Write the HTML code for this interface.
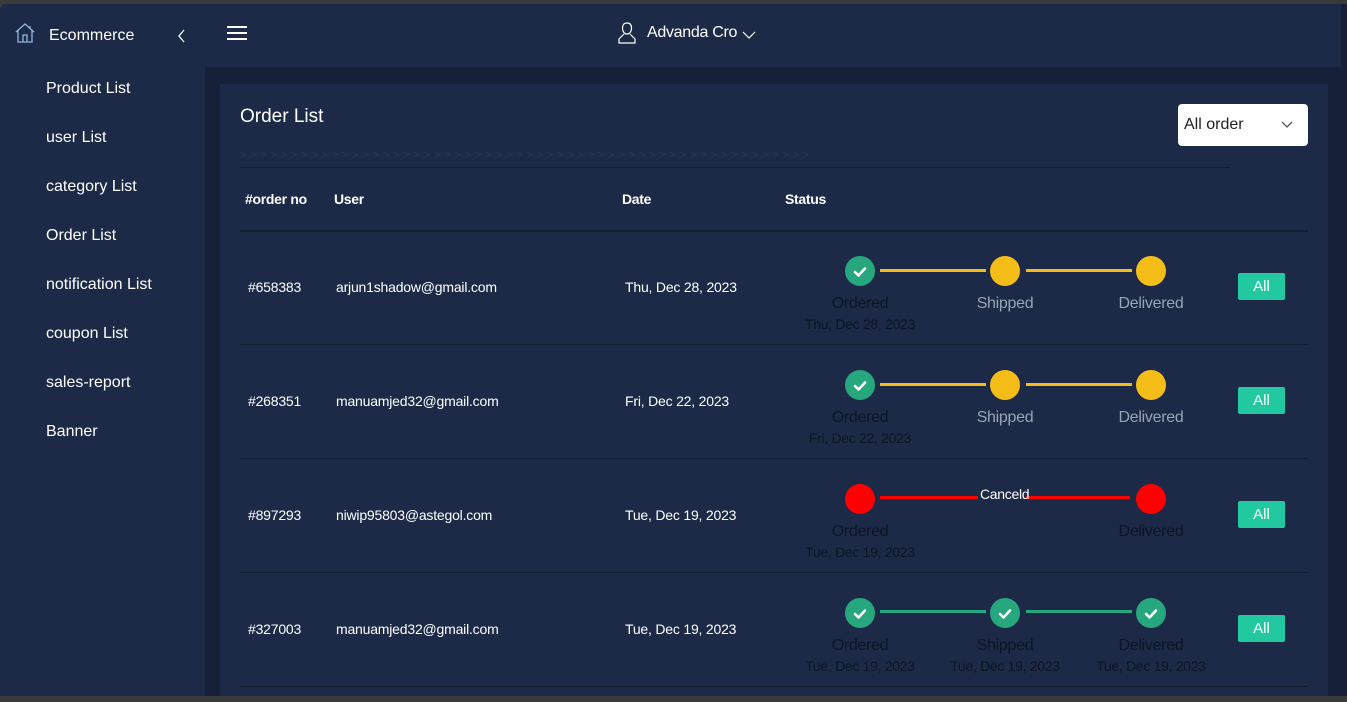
<!DOCTYPE html>
<html><head><meta charset="utf-8"><style>
*{margin:0;padding:0;box-sizing:border-box}
body{width:1347px;height:702px;overflow:hidden;background:#3a3a3a;font-family:"Liberation Sans",sans-serif;position:relative}
.win{position:absolute;left:0;top:4px;width:1341px;height:692px;background:#1c2a48;border-radius:6px 0 0 0;overflow:hidden}
.a{position:absolute;white-space:nowrap}
.side a{position:absolute;left:46px;color:#fff;font-size:16px;text-decoration:none}
.content{position:absolute;left:205px;top:63px;width:1140px;height:640px;background:#162039}
.card{position:absolute;left:220px;top:80px;width:1108px;height:620px;background:#1c2a48}
.line{position:absolute;left:240px;width:1068px;height:1px;background:#141d33}
.th{font-size:14px;font-weight:bold;color:#fff;letter-spacing:-0.3px}
.td{font-size:14px;color:#fff;letter-spacing:-0.2px}
.c{position:absolute;width:30px;height:30px;border-radius:50%}
.g{background:#27a77d}.y{background:#f5bd17}.r{background:#ff0000}
.bar{position:absolute;height:3px}
.lb{position:absolute;font-size:16px;text-align:center;width:140px;letter-spacing:-0.3px}
.dt{position:absolute;font-size:14px;text-align:center;width:140px;color:#0d1424;letter-spacing:-0.3px}
.btn{position:absolute;left:1238px;width:47px;height:27px;background:#22c9a0;color:#fff;font-size:15px;text-align:center;line-height:27px;border-radius:2px}
</style></head><body>
<div class="win">
 <svg class="a" style="left:14px;top:18px" width="22" height="22" viewBox="0 0 22 22" fill="none" stroke="#8fb7e0" stroke-width="1.3"><path d="M2 10L11 2l9 8M4 8v12h14V8M9 20v-7h4v7M16 4v3"/></svg>
 <div class="a" style="left:49px;top:23px;color:#fff;font-size:16px">Ecommerce</div>
 <svg class="a" style="left:177px;top:25px" width="10" height="14" viewBox="0 0 10 14" fill="none" stroke="#fff" stroke-width="1.3"><path d="M7 1L2 7l5 6"/></svg>
 <div class="a" style="left:227px;top:22px;width:20px;height:2px;background:#fff"></div>
 <div class="a" style="left:227px;top:28px;width:20px;height:2px;background:#fff"></div>
 <div class="a" style="left:227px;top:34px;width:20px;height:2px;background:#fff"></div>
 <svg class="a" style="left:617px;top:17px" width="20" height="24" viewBox="0 0 20 24" fill="none" stroke="#fff" stroke-width="1.2"><path d="M10 2c-3 0-4.5 2-4.5 5s1.5 6 4.5 6 4.5-3 4.5-6-1.5-5-4.5-5zM7 13l-5 5v4h16v-4l-5-5"/></svg>
 <div class="a" style="left:647px;top:20px;color:#fff;font-size:16px;letter-spacing:-0.3px">Advanda Cro</div>
 <svg class="a" style="left:742px;top:27px" width="14" height="9" viewBox="0 0 14 9" fill="none" stroke="#fff" stroke-width="1.2"><path d="M1 1l6 6 6-6"/></svg>
 <div class="side">
  <a style="top:76px">Product List</a><a style="top:125px">user List</a><a style="top:174px">category List</a><a style="top:223px">Order List</a><a style="top:272px">notification List</a><a style="top:321px">coupon List</a><a style="top:370px">sales-report</a><a style="top:419px">Banner</a>
 </div>
 <div class="content"></div>
 <div class="card"></div>
 <div class="a" style="left:240px;top:102px;color:#fff;font-size:19px">Order List</div>
 <div class="a" style="left:240px;top:146px;color:#2c3853;font-size:10px;letter-spacing:4.4px">&gt;&gt;&gt;&gt;&gt;&gt;&gt;&gt;&gt;&gt;&gt;&gt;&gt;&gt;&gt;&gt;&gt;&gt;&gt;&gt;&gt;&gt;&gt;&gt;&gt;&gt;&gt;&gt;&gt;&gt;&gt;&gt;&gt;&gt;&gt;&gt;&gt;&gt;&gt;&gt;&gt;&gt;&gt;&gt;&gt;&gt;&gt;&gt;&gt;&gt;&gt;&gt;&gt;&gt;&gt;&gt;</div>
 <div class="a" style="left:1178px;top:100px;width:130px;height:42px;background:#fff;border-radius:4px"></div>
 <div class="a" style="left:1184px;top:112px;font-size:16px;color:#222">All order</div>
 <svg class="a" style="left:1281px;top:117px" width="12" height="8" viewBox="0 0 12 8" fill="none" stroke="#555" stroke-width="1.3"><path d="M1 1l5 5 5-5"/></svg>
 <div class="line" style="top:163px;width:990px"></div>
 <div class="a th" style="left:245px;top:187px">#order no</div>
 <div class="a th" style="left:334px;top:187px">User</div>
 <div class="a th" style="left:622px;top:187px">Date</div>
 <div class="a th" style="left:785px;top:187px">Status</div>
 <div class="line" style="top:226px;height:2px"></div>
 <div class="line" style="top:340px"></div>
 <div class="line" style="top:454px"></div>
 <div class="line" style="top:568px"></div>
 <div class="line" style="top:682px"></div>

 <div class="a td" style="left:248px;top:275px">#658383</div>
 <div class="a td" style="left:336px;top:275px">arjun1shadow@gmail.com</div>
 <div class="a td" style="left:625px;top:275px">Thu, Dec 28, 2023</div>
 <div class="bar" style="left:880px;top:265px;width:106px;background:#f5bd17"></div>
 <div class="bar" style="left:1026px;top:265px;width:106px;background:#f5bd17"></div>
 <div class="c g" style="left:845px;top:252px"></div><div class="c y" style="left:990px;top:252px"></div><div class="c y" style="left:1136px;top:252px"></div>
 <div class="lb" style="left:790px;top:291px;color:#0d1424">Ordered</div>
 <div class="lb" style="left:935px;top:291px;color:#9aa3b3">Shipped</div>
 <div class="lb" style="left:1081px;top:291px;color:#9aa3b3">Delivered</div>
 <div class="dt" style="left:790px;top:312px">Thu, Dec 28, 2023</div>
 <div class="btn" style="top:269px">All</div>

 <div class="a td" style="left:248px;top:389px">#268351</div>
 <div class="a td" style="left:336px;top:389px">manuamjed32@gmail.com</div>
 <div class="a td" style="left:625px;top:389px">Fri, Dec 22, 2023</div>
 <div class="bar" style="left:880px;top:379px;width:106px;background:#f5bd17"></div>
 <div class="bar" style="left:1026px;top:379px;width:106px;background:#f5bd17"></div>
 <div class="c g" style="left:845px;top:366px"></div><div class="c y" style="left:990px;top:366px"></div><div class="c y" style="left:1136px;top:366px"></div>
 <div class="lb" style="left:790px;top:405px;color:#0d1424">Ordered</div>
 <div class="lb" style="left:935px;top:405px;color:#9aa3b3">Shipped</div>
 <div class="lb" style="left:1081px;top:405px;color:#9aa3b3">Delivered</div>
 <div class="dt" style="left:790px;top:426px">Fri, Dec 22, 2023</div>
 <div class="btn" style="top:383px">All</div>

 <div class="a td" style="left:248px;top:503px">#897293</div>
 <div class="a td" style="left:336px;top:503px">niwip95803@astegol.com</div>
 <div class="a td" style="left:625px;top:503px">Tue, Dec 19, 2023</div>
 <div class="bar" style="left:880px;top:492px;width:98px;background:#ff0000"></div>
 <div class="bar" style="left:1026px;top:492px;width:104px;background:#ff0000"></div>
 <div class="a" style="left:980px;top:482px;color:#fff;font-size:14px;letter-spacing:-0.3px">Canceld</div>
 <div class="c r" style="left:845px;top:480px"></div><div class="c r" style="left:1136px;top:480px"></div>
 <div class="lb" style="left:790px;top:519px;color:#0d1424">Ordered</div>
 <div class="lb" style="left:1081px;top:519px;color:#0d1424">Delivered</div>
 <div class="dt" style="left:790px;top:540px">Tue, Dec 19, 2023</div>
 <div class="btn" style="top:497px">All</div>

 <div class="a td" style="left:248px;top:617px">#327003</div>
 <div class="a td" style="left:336px;top:617px">manuamjed32@gmail.com</div>
 <div class="a td" style="left:625px;top:617px">Tue, Dec 19, 2023</div>
 <div class="bar" style="left:880px;top:606px;width:106px;background:#27a77d"></div>
 <div class="bar" style="left:1026px;top:606px;width:106px;background:#27a77d"></div>
 <div class="c g" style="left:845px;top:594px"></div><div class="c g" style="left:990px;top:594px"></div><div class="c g" style="left:1136px;top:594px"></div>
 <div class="lb" style="left:790px;top:633px;color:#0d1424">Ordered</div>
 <div class="lb" style="left:935px;top:633px;color:#0d1424">Shipped</div>
 <div class="lb" style="left:1081px;top:633px;color:#0d1424">Delivered</div>
 <div class="dt" style="left:790px;top:654px">Tue, Dec 19, 2023</div>
 <div class="dt" style="left:935px;top:654px">Tue, Dec 19, 2023</div>
 <div class="dt" style="left:1081px;top:654px">Tue, Dec 19, 2023</div>
 <div class="btn" style="top:611px">All</div>

 <svg class="a" style="left:0;top:0" width="1341" height="692" fill="none" stroke="#fff" stroke-width="2.6" stroke-linecap="round" stroke-linejoin="round">
  <path d="M855 268l3.5 3.5 6.5-7"/><path d="M855 382l3.5 3.5 6.5-7"/>
  <path d="M855 610l3.5 3.5 6.5-7"/><path d="M1000 610l3.5 3.5 6.5-7"/><path d="M1146 610l3.5 3.5 6.5-7"/>
 </svg>
</div>
<div class="a" style="left:1341px;top:4px;width:6px;height:692px;background:#162039"></div>
</body></html>
